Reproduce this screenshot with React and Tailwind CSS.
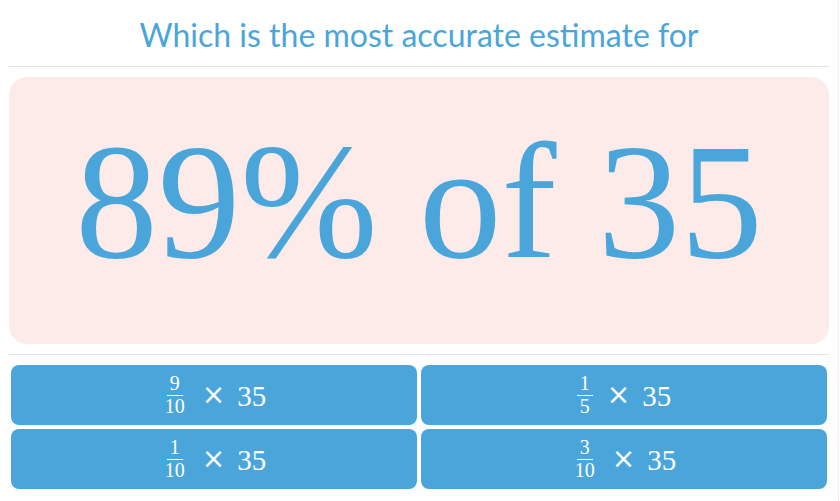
import React from 'react';

const serif = '"Liberation Serif", "Times New Roman", Times, serif';

const choices = [
  { num: 9, den: 10 },
  { num: 1, den: 5 },
  { num: 1, den: 10 },
  { num: 3, den: 10 },
];

const Fraction = ({ num, den }) => (
  <span className="inline-flex flex-col items-center text-[20px] leading-[19px] mr-[14px]">
    <span className="px-[3px] pb-[2px] border-b border-white">{num}</span>
    <span className="px-[3px] pt-[1px]">{den}</span>
  </span>
);

const App = () => {
  return (
    <div className="w-[839px] h-[501px] bg-white border-r border-dotted border-[#f0dede] px-[9px] overflow-hidden">
      <h1
        className="h-[67px] flex items-center justify-center pt-[4px] text-[32px] text-[#4aa6da] border-b border-[#e1e1e1]"
        style={{ fontFamily: 'Lato, "Open Sans", sans-serif' }}
      >
        Which is the most accurate estimate for
      </h1>

      <div className="mt-[10px] h-[267px] rounded-[18px] bg-[#fdebea] flex items-center justify-center pb-[18px]">
        <span className="text-[165px] leading-none text-[#4aa6da]" style={{ fontFamily: serif }}>
          89% of 35
        </span>
      </div>

      <div className="mt-[10px] border-t border-[#dfe4ef] pt-[10px] px-[2px]">
        <div className="grid grid-cols-2 gap-[4px]">
          {choices.map((c, i) => (
            <button
              key={i}
              className="h-[60px] rounded-[8px] bg-[#4aa6da] text-white flex items-center justify-center"
              style={{ fontFamily: serif }}
            >
              <Fraction num={c.num} den={c.den} />
              <span className="text-[28px] leading-none" style={{ fontFamily: '"DejaVu Sans", sans-serif' }}>
                ×
              </span>
              <span className="text-[29px] leading-none ml-[12px] pt-[2px]">35</span>
            </button>
          ))}
        </div>
      </div>
    </div>
  );
};

export default App;
